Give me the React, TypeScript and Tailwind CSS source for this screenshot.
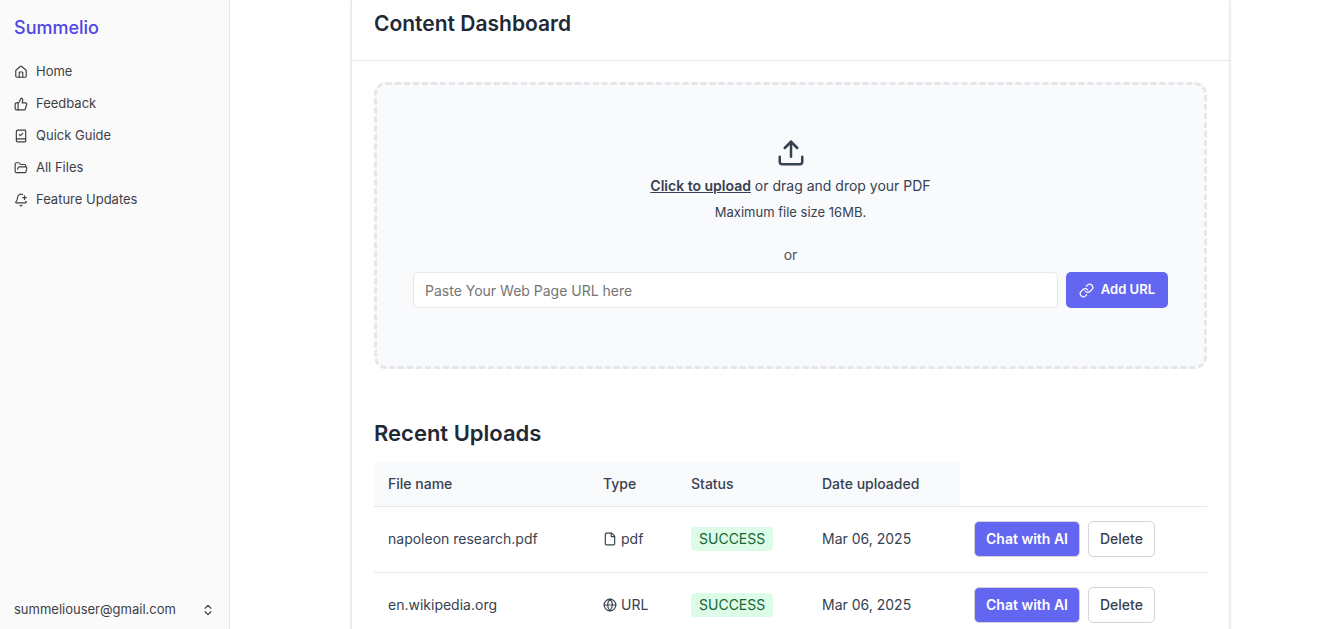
import React from "react";
import {
  BellPlus,
  BookCheck,
  ChevronsUpDown,
  File,
  FolderOpen,
  Globe,
  House,
  Link,
  ThumbsUp,
  Upload,
} from "lucide-react";

const nav = [
  { label: "Home", Icon: House },
  { label: "Feedback", Icon: ThumbsUp },
  { label: "Quick Guide", Icon: BookCheck },
  { label: "All Files", Icon: FolderOpen },
  { label: "Feature Updates", Icon: BellPlus },
];

const uploads = [
  { name: "napoleon research.pdf", type: "pdf", Icon: File, date: "Mar 06, 2025" },
  { name: "en.wikipedia.org", type: "URL", Icon: Globe, date: "Mar 06, 2025" },
];

function Sidebar() {
  return (
    <aside className="flex w-[230px] shrink-0 flex-col border-r border-gray-200 bg-[#fafafa] text-[#3f3f46]">
      <a href="#" className="px-[14px] pt-[14px] text-lg leading-7 font-medium text-[#4f46e5]">
        Summelio
      </a>
      <nav className="mt-[14px] flex flex-col">
        {nav.map(({ label, Icon }) => (
          <a key={label} href="#" className="flex h-8 items-center gap-2 px-[14px] text-[13px]">
            <Icon size={14} strokeWidth={2} />
            {label}
          </a>
        ))}
      </nav>
      <button className="mt-auto flex h-[38px] items-center justify-between px-[14px] text-left text-[13px]">
        summeliouser@gmail.com
        <ChevronsUpDown size={14} />
      </button>
    </aside>
  );
}

export default function App() {
  return (
    <div className="flex h-screen overflow-hidden bg-white font-['Inter',sans-serif] text-[#374151]">
      <Sidebar />
      <main className="flex flex-1 justify-center overflow-hidden pr-6 pl-[42px]">
        <section className="h-max w-full max-w-[879px] border-x border-gray-200 shadow-sm">
          <header className="border-b border-gray-200 px-[22px] pt-[9px] pb-[21px]">
            <h1 className="text-[21px] leading-[30px] font-semibold text-[#1f2937]">Content Dashboard</h1>
          </header>
          <div className="px-[22px] pt-[21px]">
            <div className="flex flex-col items-center rounded-xl border-3 border-dashed border-[#e5e7eb] bg-[#f9fafb] px-9 pt-[53px] pb-[58px]">
              <Upload size={30} />
              <p className="mt-[6px] text-sm leading-6">
                <button className="font-semibold underline">Click to upload</button> or drag and drop your PDF
              </p>
              <p className="mt-1 text-[13px] leading-5">Maximum file size 16MB.</p>
              <p className="mt-[21px] text-sm leading-6 text-[#4b5563]">or</p>
              <form className="mt-[5px] flex w-full gap-2">
                <input
                  aria-label="Web page URL"
                  placeholder="Paste Your Web Page URL here"
                  className="h-9 min-w-0 flex-1 rounded-[5px] border border-[#e5e7eb] bg-white px-[11px] text-sm placeholder:text-[#757575]"
                />
                <button type="button" className="flex h-9 items-center gap-[7px] rounded-[5px] bg-[#6366f1] px-[13px] text-[13px] font-semibold text-white">
                  <Link size={15} strokeWidth={2} />
                  Add URL
                </button>
              </form>
            </div>
            <h2 className="mt-[49px] text-[22px] leading-[30px] font-semibold text-[#1f2937]">Recent Uploads</h2>
            <table className="mt-[14px] w-full table-fixed text-left text-sm leading-6">
              <colgroup>
                <col className="w-[215px]" />
                <col className="w-[88px]" />
                <col className="w-[131px]" />
                <col className="w-[152px]" />
                <col />
              </colgroup>
              <thead>
                <tr className="h-11 border-b border-[#e5e7eb]">
                  {["File name", "Type", "Status", "Date uploaded"].map((h) => (
                    <th key={h} scope="col" className="bg-[#f9fafb] px-[14px] font-medium">
                      {h}
                    </th>
                  ))}
                  <td />
                </tr>
              </thead>
              <tbody>
                {uploads.map(({ name, type, Icon, date }) => (
                  <tr key={name} className="h-[66px] border-b border-[#e5e7eb]">
                    <td className="px-[14px]">{name}</td>
                    <td className="px-[14px]">
                      <span className="flex items-center gap-1">
                        <Icon size={14} />
                        {type}
                      </span>
                    </td>
                    <td className="px-[14px]">
                      <span className="inline-block rounded-[4px] bg-[#dcfce7] px-2 text-[#166534]">SUCCESS</span>
                    </td>
                    <td className="px-[14px]">{date}</td>
                    <td className="px-[14px]">
                      <div className="flex gap-2">
                        <button className="h-9 rounded-[5px] border border-[#d1d5db] bg-[#6366f1] px-[11px] font-semibold text-white">
                          Chat with AI
                        </button>
                        <button className="h-9 rounded-[5px] border border-[#d1d5db] bg-white px-[11px] font-medium">Delete</button>
                      </div>
                    </td>
                  </tr>
                ))}
              </tbody>
            </table>
          </div>
        </section>
      </main>
    </div>
  );
}
